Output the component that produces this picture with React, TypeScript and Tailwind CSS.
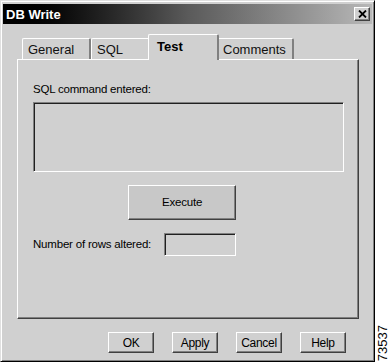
import React from "react";

const FONT = { fontFamily: '"Liberation Sans", Arial, sans-serif' };

const raised =
  "border border-t-white border-l-white border-r-[#404040] border-b-[#404040] shadow-[inset_-1px_-1px_0_#808080]";
const sunken =
  "border border-t-[#808080] border-l-[#808080] border-r-white border-b-white shadow-[inset_1px_1px_0_#202020]";

interface TabProps {
  label: string;
  width: string;
  selected?: boolean;
}

function Tab({ label, width, selected = false }: TabProps) {
  if (selected) {
    return (
      <div
        className={`${width} h-[26px] -mx-[2px] -mb-[1px] z-10 relative bg-[#d0d0d0] border-t border-l border-t-white border-l-white border-r-2 border-r-[#808080] rounded-t-[2px] flex items-start pl-[8px] pt-[2px] text-[13px] font-bold text-black`}
      >
        {label}
      </div>
    );
  }
  return (
    <div
      className={`${width} h-[21px] bg-[#d0d0d0] border-t border-l border-t-white border-l-white border-r-2 border-r-[#808080] rounded-t-[2px] flex items-center pl-[5px] pt-[1px] text-[13px] text-[#111]`}
    >
      {label}
    </div>
  );
}

function DialogButton({ label }: { label: string }) {
  return (
    <div
      className={`${raised} w-[46px] h-[21px] bg-[#d0d0d0] flex items-center justify-center text-[12px] tracking-[-0.3px] text-black`}
    >
      {label}
    </div>
  );
}

export default function App() {
  return (
    <div className="w-[389px] h-[363px] bg-white flex" style={FONT}>
      <div className="w-[375px] h-[362px] bg-[#d0d0d0] border border-t-[#e0e0e0] border-l-[#e0e0e0] border-r-black border-b-black shadow-[inset_1px_1px_0_#ffffff,inset_-1px_-1px_0_#808080] p-[2px] flex flex-col">
        {/* title bar */}
        <div className="h-[20px] mt-[1px] bg-gradient-to-r from-black via-[#5a5a5a] to-[#b8b8b8] flex items-center justify-between pl-[3px] pr-[2px]">
          <span className="text-white font-bold text-[13px] leading-none">DB Write</span>
          <div className={`${raised} w-[16px] h-[14px] bg-[#d0d0d0] flex items-center justify-center`}>
            <svg width="9" height="8" viewBox="0 0 9 8">
              <path d="M1 0.5 L8 7.5 M8 0.5 L1 7.5" stroke="#000" strokeWidth="1.8" />
            </svg>
          </div>
        </div>

        {/* tabs */}
        <div className="mt-[10px] ml-[17px] pl-[2px] flex items-end h-[25px]">
          <Tab label="General" width="w-[69px]" />
          <Tab label="SQL" width="w-[59px]" />
          <Tab label="Test" width="w-[71px]" selected />
          <Tab label="Comments" width="w-[77px]" />
        </div>

        {/* panel */}
        <div className="ml-[14px] w-[342px] h-[260px] border border-t-white border-l-white border-r-[#404040] border-b-[#404040] shadow-[inset_-1px_-1px_0_#808080] flex flex-col pl-[15px] pt-[22px]">
          <div className="text-[11.5px] leading-[14px] tracking-[-0.2px] text-black">SQL command entered:</div>
          <div className={`${sunken} mt-[6px] w-[311px] h-[70px] bg-[#d0d0d0]`} />
          <div
            className={`${raised} mt-[13px] ml-[95px] w-[108px] h-[35px] bg-[#c8c8c8] flex items-center justify-center text-[11.5px] tracking-[-0.2px] text-black`}
          >
            Execute
          </div>
          <div className="mt-[13px] flex items-center">
            <span className="text-[11.5px] tracking-[-0.2px] text-black w-[131px]">Number of rows altered:</span>
            <div className={`${sunken} w-[72px] h-[23px] bg-[#d0d0d0]`} />
          </div>
        </div>

        {/* bottom buttons */}
        <div className="mt-[13px] ml-[105px] flex gap-[18px]">
          <DialogButton label="OK" />
          <DialogButton label="Apply" />
          <DialogButton label="Cancel" />
          <DialogButton label="Help" />
        </div>
      </div>

      <div className="flex-1 flex items-end justify-center pb-[2px]">
        <span className="[writing-mode:vertical-rl] rotate-180 text-[13px] leading-none text-black">
          73537
        </span>
      </div>
    </div>
  );
}
